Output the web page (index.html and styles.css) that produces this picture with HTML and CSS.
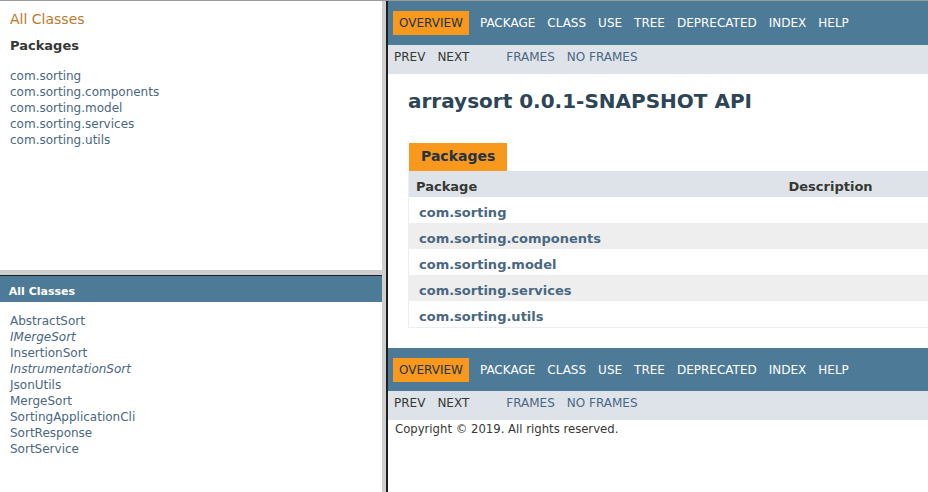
FILE: index.html
```html
<!DOCTYPE html>
<html lang="en">
<head>
<meta charset="utf-8">
<title>Overview (arraysort 0.0.1-SNAPSHOT API)</title>
<link rel="stylesheet" href="styles.css">
</head>
<body>
<div class="frameset">
  <div class="left-col">
    <div class="frame top-frame">
      <div class="index-header"><a class="all-link" href="#">All Classes</a></div>
      <div class="index-container">
        <h2 class="index-title">Packages</h2>
        <ul class="index-list">
          <li><a href="#">com.sorting</a></li>
          <li><a href="#">com.sorting.components</a></li>
          <li><a href="#">com.sorting.model</a></li>
          <li><a href="#">com.sorting.services</a></li>
          <li><a href="#">com.sorting.utils</a></li>
        </ul>
      </div>
    </div>
    <div class="hsep"></div>
    <div class="frame bottom-frame">
      <h1 class="bar">All Classes</h1>
      <div class="index-container">
        <ul class="index-list">
          <li><a href="#">AbstractSort</a></li>
          <li><a href="#"><span class="interface">IMergeSort</span></a></li>
          <li><a href="#">InsertionSort</a></li>
          <li><a href="#"><span class="interface">InstrumentationSort</span></a></li>
          <li><a href="#">JsonUtils</a></li>
          <li><a href="#">MergeSort</a></li>
          <li><a href="#">SortingApplicationCli</a></li>
          <li><a href="#">SortResponse</a></li>
          <li><a href="#">SortService</a></li>
        </ul>
      </div>
    </div>
  </div>
  <div class="vsep"></div>
  <div class="frame right-frame">
    <div class="page">
      <div class="top-nav">
        <ul class="nav-list">
          <li class="rev">Overview</li>
          <li>Package</li>
          <li>Class</li>
          <li>Use</li>
          <li><a href="#">Tree</a></li>
          <li><a href="#">Deprecated</a></li>
          <li><a href="#">Index</a></li>
          <li><a href="#">Help</a></li>
        </ul>
      </div>
      <div class="sub-nav">
        <ul class="sub-list">
          <li>Prev</li>
          <li>Next</li>
        </ul>
        <ul class="sub-list">
          <li><a href="#">Frames</a></li>
          <li><a href="#">No&nbsp;Frames</a></li>
        </ul>
      </div>
      <div class="header">
        <h1 class="title">arraysort 0.0.1-SNAPSHOT API</h1>
      </div>
      <div class="content-container">
        <table class="overview-summary">
          <caption><span>Packages</span></caption>
          <tr>
            <th class="col-first">Package</th>
            <th class="col-last">Description</th>
          </tr>
          <tr class="alt-color">
            <td class="col-first"><a href="#">com.sorting</a></td>
            <td class="col-last">&nbsp;</td>
          </tr>
          <tr class="row-color">
            <td class="col-first"><a href="#">com.sorting.components</a></td>
            <td class="col-last">&nbsp;</td>
          </tr>
          <tr class="alt-color">
            <td class="col-first"><a href="#">com.sorting.model</a></td>
            <td class="col-last">&nbsp;</td>
          </tr>
          <tr class="row-color">
            <td class="col-first"><a href="#">com.sorting.services</a></td>
            <td class="col-last">&nbsp;</td>
          </tr>
          <tr class="alt-color">
            <td class="col-first"><a href="#">com.sorting.utils</a></td>
            <td class="col-last">&nbsp;</td>
          </tr>
        </table>
      </div>
      <div class="top-nav bottom-nav">
        <ul class="nav-list">
          <li class="rev">Overview</li>
          <li>Package</li>
          <li>Class</li>
          <li>Use</li>
          <li><a href="#">Tree</a></li>
          <li><a href="#">Deprecated</a></li>
          <li><a href="#">Index</a></li>
          <li><a href="#">Help</a></li>
        </ul>
      </div>
      <div class="sub-nav">
        <ul class="sub-list">
          <li>Prev</li>
          <li>Next</li>
        </ul>
        <ul class="sub-list">
          <li><a href="#">Frames</a></li>
          <li><a href="#">No&nbsp;Frames</a></li>
        </ul>
      </div>
      <p class="legal-copy"><small>Copyright &#169; 2019. All rights reserved.</small></p>
    </div>
  </div>
</div>
</body>
</html>
```

FILE: styles.css
```css
html, body {
  margin: 0;
  padding: 0;
}

body {
  background: #ffffff;
  color: #353833;
  font-family: "DejaVu Sans", Arial, Helvetica, sans-serif;
  font-size: 14px;
  overflow: hidden;
}

a {
  color: #4a6782;
  text-decoration: none;
}

.frameset {
  display: flex;
  width: 928px;
  height: 491px;
  border-top: 1px solid #9a9a9a;
  overflow: hidden;
}

.left-col {
  flex: 0 0 382px;
  display: flex;
  flex-direction: column;
}

.frame {
  overflow: hidden;
  background: #ffffff;
}

.top-frame {
  height: 269px;
  flex: 0 0 269px;
}

.hsep {
  flex: 0 0 5px;
  background: #cfcfcf;
  border-bottom: 1px solid #1e1e1e;
}

.bottom-frame {
  flex: 1 1 auto;
}

.vsep {
  flex: 0 0 4px;
  background: #cfcfcf;
  border-right: 2px solid #1e1e1e;
}

.right-frame {
  flex: 0 0 1532px;
  width: 1532px;
}

/* left frames */
.index-header {
  margin: 10px;
  font-size: 14px;
}

.all-link {
  color: #bb7a2a;
}

.index-container {
  margin: 10px;
  font-size: 12px;
}

.index-title {
  font-size: 13px;
  font-weight: bold;
  margin: 0.83em 0;
  padding: 0 0 3px 0;
}

.index-list {
  margin: 0;
  padding: 0;
}

.index-list li {
  list-style: none;
  padding-top: 2px;
}

.interface {
  font-style: italic;
}

.bar {
  margin: 0;
  background: #4d7a97;
  color: #ffffff;
  font-size: 11px;
  font-weight: bold;
  padding: 0.8em 0.5em 0.4em 0.8em;
}

/* right frame */
.top-nav {
  background: #4d7a97;
  color: #ffffff;
  height: 2.8em;
  padding-top: 10px;
  font-size: 12px;
  overflow: hidden;
}

.top-nav a {
  color: #ffffff;
}

.nav-list {
  display: flex;
  margin: 0;
  padding: 0 0 0 5px;
}

.nav-list li {
  list-style: none;
  padding: 5px 6px;
  text-transform: uppercase;
}

.nav-list .rev {
  background: #f8981d;
  color: #253441;
  margin-right: 5px;
}

.bottom-nav {
  margin-top: 10px;
}

.sub-nav {
  display: flex;
  background: #dee3e9;
  font-size: 12px;
  padding-bottom: 5px;
}

.sub-list {
  display: flex;
  margin: 0 25px 0 0;
  padding: 0;
}

.sub-list li {
  list-style: none;
  padding: 5px 6px;
  text-transform: uppercase;
}

.header {
  margin: 0 20px;
  padding-top: 5px;
}

.title {
  color: #2c4557;
  font-size: 20px;
  font-weight: bold;
  margin: 10px 0;
}

.content-container {
  padding: 10px 20px;
}

.overview-summary {
  width: 100%;
  border-spacing: 0;
  border-left: 1px solid #eeeeee;
  border-right: 1px solid #eeeeee;
  border-bottom: 1px solid #eeeeee;
}

.overview-summary caption {
  text-align: left;
  color: #253441;
  font-weight: bold;
  padding-top: 10px;
  padding-left: 1px;
  overflow: hidden;
  white-space: pre;
}

.overview-summary caption span {
  float: left;
  display: inline-block;
  height: 16px;
  padding: 5px 12px 7px 12px;
  background: #f8981d;
  white-space: nowrap;
}

.overview-summary th {
  background: #dee3e9;
  text-align: left;
  font-size: 13px;
  font-weight: bold;
  padding: 8px 3px 3px 7px;
}

.overview-summary td {
  text-align: left;
  vertical-align: top;
  font-size: 13px;
  padding: 8px 0 3px 10px;
}

.col-first {
  width: 25%;
  white-space: nowrap;
}

.overview-summary td.col-first a {
  font-weight: bold;
}

.alt-color {
  background: #ffffff;
}

.row-color {
  background: #eeeeef;
}

.legal-copy {
  margin: 0 0 0 0.5em;
}
```
